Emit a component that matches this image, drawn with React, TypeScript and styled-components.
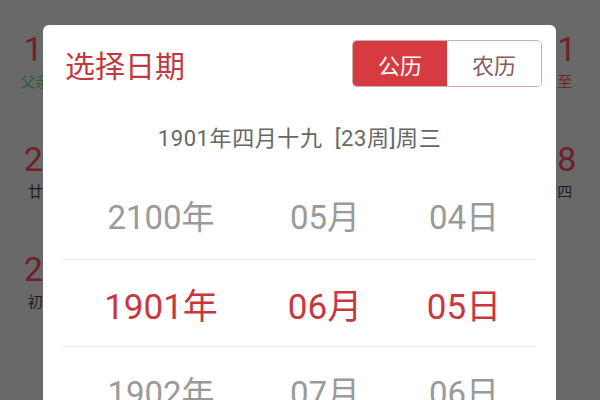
import React from 'react';
import styled, {createGlobalStyle} from "styled-components";

const GlobalStyle = createGlobalStyle`
  html, body {
    margin: 0;
    padding: 0;
    width: 600px;
    height: 400px;
    overflow: hidden;
    font-family: Roboto, "Noto Sans CJK SC", sans-serif;
  }
`

const Page = styled.div`
  position: relative;
  width: 600px;
  height: 400px;
  overflow: hidden;
  background-color: #696969;
`

const Calendar = styled.div`
  display: grid;
  grid-template-columns: repeat(7, 1fr);
  grid-auto-rows: 110px;
`

const Day = styled.div`
  display: flex;
  flex-direction: column;
  align-items: center;
  padding-top: 31px;
`

const DayNum = styled.div`
  font-size: 34px;
  line-height: 36px;
  color: #6f2029;
`

const DayLabel = styled.div<{$tone?: 'green' | 'red'}>`
  margin-top: 6px;
  font-size: 15px;
  line-height: 18px;
  color: ${p => p.$tone === 'green' ? '#2c5b39' : p.$tone === 'red' ? '#6f252c' : '#1e1e1e'};
`

const Modal = styled.div`
  position: absolute;
  top: 25px;
  left: 43px;
  width: 513px;
  height: 420px;
  background: #fff;
  border-radius: 6px;
`

const Header = styled.div`
  display: flex;
  align-items: center;
  justify-content: space-between;
  padding: 15px 14px 0 22px;
`

const Title = styled.h2`
  margin: 0;
  font-size: 30px;
  font-weight: 400;
  color: #c0393f;
`

const Toggle = styled.div`
  display: flex;
  width: 190px;
  height: 47px;
  border: 1px solid #d2aeb0;
  border-radius: 5px;
  overflow: hidden;
  box-sizing: border-box;
`

const ToggleBtn = styled.div<{$active?: boolean}>`
  flex: 1;
  display: flex;
  align-items: center;
  justify-content: center;
  font-size: 22px;
  background: ${p => p.$active ? '#d63b41' : '#fff'};
  color: ${p => p.$active ? '#fff' : '#8a5a5f'};
`

const Subtitle = styled.div`
  margin-top: 37px;
  text-align: center;
  font-size: 22px;
  line-height: 30px;
  letter-spacing: 0.6px;
  color: #666;
  white-space: pre;
`

const Picker = styled.div`
  margin: 17px 20px 0;
`

const Row = styled.div<{$selected?: boolean}>`
  display: grid;
  grid-template-columns: 196px 132px 146px;
  align-items: center;
  height: 88px;
  box-sizing: border-box;
  border-top: ${p => p.$selected ? '1px solid #ececec' : 'none'};
  border-bottom: ${p => p.$selected ? '1px solid #ececec' : 'none'};
`

const Cell = styled.div<{$selected?: boolean}>`
  text-align: center;
  font-size: ${p => p.$selected ? '35px' : '33px'};
  color: ${p => p.$selected ? '#c9373e' : '#9a9a9a'};
`

type DayItem = { num: string, label: string, tone?: 'green' | 'red' }

const empty: DayItem = {num: '', label: ''}

// only the outer columns peek out from behind the dialog
const weeks: DayItem[][] = [
    [{num: '16', label: '父亲节', tone: 'green'}, empty, empty, empty, empty, empty, {num: '21', label: '夏至', tone: 'red'}],
    [{num: '23', label: '廿一'}, empty, empty, empty, empty, empty, {num: '28', label: '廿四'}],
    [{num: '29', label: '初一'}, empty, empty, empty, empty, empty, empty],
]

const rows = [
    {year: '2100年', month: '05月', day: '04日'},
    {year: '1901年', month: '06月', day: '05日', selected: true},
    {year: '1902年', month: '07月', day: '06日'},
]

const App: React.FC = () => {
    return (
        <>
            <GlobalStyle/>
            <Page>
                <Calendar>
                    {
                        weeks.flat().map((d, i) => (
                            <Day key={i}>
                                <DayNum>{d.num}</DayNum>
                                <DayLabel $tone={d.tone}>{d.label}</DayLabel>
                            </Day>
                        ))
                    }
                </Calendar>
                <Modal>
                    <Header>
                        <Title>选择日期</Title>
                        <Toggle>
                            <ToggleBtn $active>公历</ToggleBtn>
                            <ToggleBtn>农历</ToggleBtn>
                        </Toggle>
                    </Header>
                    <Subtitle>{'1901年四月十九  [23周]周三'}</Subtitle>
                    <Picker>
                        {
                            rows.map(r => (
                                <Row key={r.year} $selected={r.selected}>
                                    <Cell $selected={r.selected}>{r.year}</Cell>
                                    <Cell $selected={r.selected}>{r.month}</Cell>
                                    <Cell $selected={r.selected}>{r.day}</Cell>
                                </Row>
                            ))
                        }
                    </Picker>
                </Modal>
            </Page>
        </>
    )
}

export default App
